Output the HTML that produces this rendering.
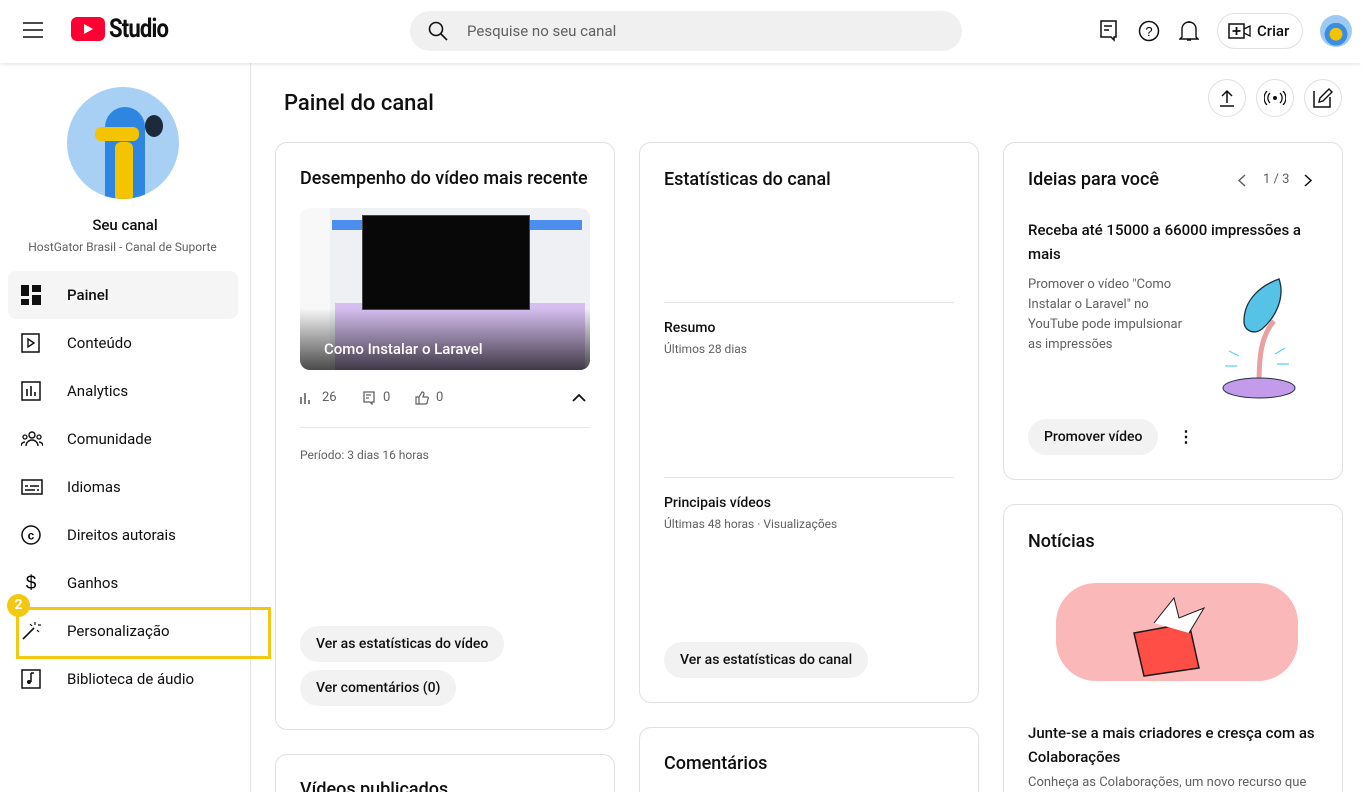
<!DOCTYPE html>
<html style="width:1361px;height:792px;overflow:hidden"><head><meta charset="utf-8"><style>
*{box-sizing:border-box;margin:0;padding:0}
body{width:1361px;height:792px;overflow:hidden;background:#fff;font-family:"Roboto","Liberation Sans",sans-serif;color:#0f0f0f;position:relative}
.abs{position:absolute}
.hdr{position:absolute;left:0;top:0;width:1361px;height:63px;background:#fff;box-shadow:0 1px 4px rgba(0,0,0,.12);z-index:5}
.side{position:absolute;left:0;top:63px;width:251px;height:729px;border-right:1px solid #e5e5e5}
.nav{position:absolute;left:8px;width:230px;height:48px;border-radius:8px;display:flex;align-items:center;font-size:15px}
.nav svg{position:absolute;left:13px}
.nav span{position:absolute;left:59px}
.card{position:absolute;border:1px solid #e0e0e0;border-radius:12px;background:#fff}
.h{font-size:18px;font-weight:500;position:absolute}
.btn{position:absolute;background:#f2f2f2;border-radius:18px;height:36px;font-size:14px;font-weight:500;display:flex;align-items:center;padding:0 16px}
.sm{font-size:12px;color:#606060;position:absolute}
.t{font-size:14px;font-weight:500;position:absolute}
.circ{position:absolute;width:38px;height:38px;border:1px solid #e0e0e0;border-radius:50%;display:flex;align-items:center;justify-content:center}
</style></head><body>
<div class="hdr">
 <svg class="abs" style="left:23px;top:21px" width="20" height="18"><path d="M0 2h20M0 9h20M0 16h20" stroke="#0f0f0f" stroke-width="1.5"/></svg>
 <svg class="abs" style="left:71px;top:17px" width="34" height="24"><rect width="34" height="24" rx="6" fill="#ff0033"/><path d="M13 7l9 5-9 5z" fill="#fff"/></svg>
 <div class="abs" style="left:109px;top:14px;font-size:26px;font-weight:700;letter-spacing:-1px;transform:scaleX(.85);transform-origin:left">Studio</div>
 <div class="abs" style="left:410px;top:11px;width:552px;height:40px;background:#f0f0f0;border-radius:20px"></div>
 <svg class="abs" style="left:428px;top:21px" width="20" height="20"><circle cx="8" cy="8" r="6.5" fill="none" stroke="#0f0f0f" stroke-width="1.6"/><path d="M13 13l6 6" stroke="#0f0f0f" stroke-width="1.6"/></svg>
 <div class="abs" style="left:467px;top:22px;font-size:15px;color:#606060">Pesquise no seu canal</div>
 <svg class="abs" style="left:1100px;top:20px" width="18" height="22"><path d="M1 1h15v16h-2v3l-3-3H1z M4 6h8M4 10h5" fill="none" stroke="#0f0f0f" stroke-width="1.5"/></svg>
 <svg class="abs" style="left:1138px;top:20px" width="22" height="22"><circle cx="11" cy="11" r="9.5" fill="none" stroke="#0f0f0f" stroke-width="1.5"/><text x="11" y="16" font-size="13" text-anchor="middle" font-family="Liberation Sans">?</text></svg>
 <svg class="abs" style="left:1179px;top:19px" width="20" height="24"><path d="M3 18V10a7 7 0 0114 0v8l2 2H1z M8 21h4M10 2v2" fill="none" stroke="#0f0f0f" stroke-width="1.4"/></svg>
 <div class="abs" style="left:1217px;top:13px;width:86px;height:36px;border:1px solid #e0e0e0;border-radius:18px"></div>
 <svg class="abs" style="left:1228px;top:22px" width="24" height="18"><rect x="1" y="2" width="15" height="14" fill="none" stroke="#0f0f0f" stroke-width="1.5"/><path d="M8.5 5v8M4.5 9h8" stroke="#0f0f0f" stroke-width="1.8"/><path d="M16 7l6-3v10l-6-3" fill="none" stroke="#0f0f0f" stroke-width="1.3"/></svg>
 <div class="abs" style="left:1257px;top:22px;font-size:15px;font-weight:500">Criar</div>
 <div class="abs" style="left:1320px;top:15px;width:32px;height:32px;border-radius:50%;background:radial-gradient(circle at 50% 60%,#f5c400 0 25%,#3b8de0 26% 45%,#9ccaf3 46%)"></div>
</div>

<div class="side">
 <div class="abs" style="left:67px;top:24px;width:112px;height:112px;border-radius:50%;background:#a8d0f5;overflow:hidden">
  <div class="abs" style="left:38px;top:20px;width:40px;height:95px;background:#2f86e0;border-radius:20px 20px 0 0"></div>
  <div class="abs" style="left:48px;top:55px;width:18px;height:60px;background:#f5c400;border-radius:6px"></div>
  <div class="abs" style="left:28px;top:40px;width:44px;height:14px;background:#f5c400;border-radius:6px"></div>
  <div class="abs" style="left:78px;top:28px;width:18px;height:22px;background:#1e2a3a;border-radius:50%"></div>
 </div>
 <div class="abs" style="left:0;width:250px;top:153px;text-align:center;font-size:15px;font-weight:500">Seu canal</div>
 <div class="abs" style="left:0;width:245px;top:177px;text-align:center;font-size:12px;color:#606060">HostGator Brasil - Canal de Suporte</div>
 <div class="nav" style="top:208px;background:#f5f5f5;font-weight:500"><svg width="20" height="20"><path d="M0 0h8v11H0zM11 0h9v7h-9zM11 10h9v10h-9zM0 14h8v6H0z" fill="#0f0f0f"/></svg><span>Painel</span></div>
 <div class="nav" style="top:256px"><svg width="20" height="20"><rect x="1" y="1" width="17" height="18" fill="none" stroke="#0f0f0f" stroke-width="1.5"/><path d="M7 6l6 4-6 4z" fill="none" stroke="#0f0f0f" stroke-width="1.4"/></svg><span>Conteúdo</span></div>
 <div class="nav" style="top:304px"><svg width="20" height="20"><rect x="1" y="1" width="18" height="18" fill="none" stroke="#0f0f0f" stroke-width="1.5"/><path d="M6 8v7M10 5v10M14 11v4" stroke="#0f0f0f" stroke-width="1.6"/></svg><span>Analytics</span></div>
 <div class="nav" style="top:352px"><svg width="22" height="16"><circle cx="11" cy="4" r="3" fill="none" stroke="#0f0f0f" stroke-width="1.4"/><circle cx="4" cy="6" r="2" fill="none" stroke="#0f0f0f" stroke-width="1.3"/><circle cx="18" cy="6" r="2" fill="none" stroke="#0f0f0f" stroke-width="1.3"/><path d="M5 15a6 6 0 0112 0M0 15a4 4 0 014-4M22 15a4 4 0 00-4-4" fill="none" stroke="#0f0f0f" stroke-width="1.4"/></svg><span>Comunidade</span></div>
 <div class="nav" style="top:400px"><svg width="22" height="16"><rect x="1" y="1" width="20" height="14" fill="none" stroke="#0f0f0f" stroke-width="1.5"/><path d="M4 7h3M9 7h9M4 11h10M16 11h2" stroke="#0f0f0f" stroke-width="1.5"/></svg><span>Idiomas</span></div>
 <div class="nav" style="top:448px"><svg width="20" height="20"><circle cx="10" cy="10" r="9" fill="none" stroke="#0f0f0f" stroke-width="1.5"/><text x="10" y="14.5" font-size="12" font-weight="bold" text-anchor="middle" font-family="Liberation Sans">c</text></svg><span>Direitos autorais</span></div>
 <div class="nav" style="top:496px"><svg width="20" height="22"><text x="10" y="17" font-size="19" text-anchor="middle" font-family="Liberation Sans">$</text></svg><span>Ganhos</span></div>
 <div class="nav" style="top:544px"><svg width="20" height="20"><path d="M2 18L13 7" stroke="#0f0f0f" stroke-width="1.6"/><path d="M14 1v3M17 4h3M16 9l2 2M9 3l2 2" stroke="#0f0f0f" stroke-width="1.2"/></svg><span>Personalização</span></div>
 <div class="nav" style="top:592px"><svg width="20" height="20"><rect x="1" y="1" width="18" height="18" fill="none" stroke="#0f0f0f" stroke-width="1.5"/><path d="M10 4v9M10 4h3" stroke="#0f0f0f" stroke-width="1.5"/><circle cx="8" cy="13" r="2" fill="#0f0f0f"/></svg><span>Biblioteca de áudio</span></div>
 <div class="abs" style="left:16px;top:544px;width:255px;height:52px;border:3px solid #f2c811"></div>
 <div class="abs" style="left:7px;top:531px;width:23px;height:23px;border-radius:50%;background:#f2c811;color:#fff;font-size:14px;font-weight:700;text-align:center;line-height:23px">2</div>
</div>

<div class="abs" style="left:284px;top:91px;font-size:22px;font-weight:500">Painel do canal</div>
<div class="circ" style="left:1208px;top:79px"><svg width="16" height="18"><path d="M8 14V2M3 7l5-5 5 5M1 17h14" fill="none" stroke="#0f0f0f" stroke-width="1.5"/></svg></div>
<div class="circ" style="left:1256px;top:79px"><svg width="22" height="14"><circle cx="11" cy="7" r="2" fill="#0f0f0f"/><path d="M6 2a7 7 0 000 10M16 2a7 7 0 010 10M3 0a10 10 0 000 14M19 0a10 10 0 010 14" fill="none" stroke="#0f0f0f" stroke-width="1.3"/></svg></div>
<div class="circ" style="left:1304px;top:79px"><svg width="20" height="20"><path d="M1 3v16h16V9" fill="none" stroke="#0f0f0f" stroke-width="1.5"/><path d="M6 14l1-4 9-9 3 3-9 9z" fill="none" stroke="#0f0f0f" stroke-width="1.4"/></svg></div>

<!-- card 1 -->
<div class="card" style="left:275px;top:142px;width:340px;height:588px">
 <div class="h" style="left:24px;top:25px">Desempenho do vídeo mais recente</div>
 <div class="abs" style="left:24px;top:65px;width:290px;height:162px;border-radius:10px;overflow:hidden;background:#eef0f4">
  <div class="abs" style="left:0;top:0;width:30px;height:162px;background:#f8f8f8"></div>
  <div class="abs" style="left:32px;top:12px;width:250px;height:10px;background:#4b8ef0"></div>
  <div class="abs" style="left:35px;top:95px;width:250px;height:67px;background:#d6bff0"></div>
  <div class="abs" style="left:62px;top:7px;width:168px;height:95px;background:#080808;border:1px solid #444"></div>
  <div class="abs" style="left:0;top:100px;width:290px;height:62px;background:linear-gradient(rgba(0,0,0,0),rgba(0,0,0,.7))"></div>
  <div class="abs" style="left:24px;top:132px;color:#fff;font-size:15px;font-weight:500">Como Instalar o Laravel</div>
 </div>
 <svg class="abs" style="left:24px;top:249px" width="12" height="12"><path d="M1 5v7M5 1v11M9 8v4" stroke="#606060" stroke-width="1.6"/></svg>
 <div class="abs" style="left:46px;top:247px;font-size:13px;color:#606060">26</div>
 <svg class="abs" style="left:87px;top:248px" width="12" height="14"><path d="M1 1h10v10H9v2l-2-2H1z M3 4h5M3 7h3" fill="none" stroke="#606060" stroke-width="1.3"/></svg>
 <div class="abs" style="left:107px;top:247px;font-size:13px;color:#606060">0</div>
 <svg class="abs" style="left:139px;top:248px" width="14" height="14"><path d="M1 6h3v7H1zM4 6l3-5c2 0 2 1 2 2l-1 3h4c1 0 2 1 1 2l-1 4c0 1-1 1-2 1H4" fill="none" stroke="#606060" stroke-width="1.2"/></svg>
 <div class="abs" style="left:160px;top:247px;font-size:13px;color:#606060">0</div>
 <svg class="abs" style="left:296px;top:250px" width="14" height="9"><path d="M1 8l6-6 6 6" fill="none" stroke="#0f0f0f" stroke-width="1.8"/></svg>
 <div class="abs" style="left:24px;top:284px;width:290px;height:1px;background:#e5e5e5"></div>
 <div class="sm" style="left:24px;top:305px">Período: 3 dias 16 horas</div>
 <div class="btn" style="left:24px;top:483px">Ver as estatísticas do vídeo</div>
 <div class="btn" style="left:24px;top:527px">Ver comentários (0)</div>
</div>
<div class="card" style="left:275px;top:754px;width:340px;height:60px"><div class="h" style="left:24px;top:24px">Vídeos publicados</div></div>

<!-- card 2 -->
<div class="card" style="left:639px;top:142px;width:340px;height:561px">
 <div class="h" style="left:24px;top:26px">Estatísticas do canal</div>
 <div class="abs" style="left:24px;top:159px;width:290px;height:1px;background:#e5e5e5"></div>
 <div class="t" style="left:24px;top:177px">Resumo</div>
 <div class="sm" style="left:24px;top:199px">Últimos 28 dias</div>
 <div class="abs" style="left:24px;top:334px;width:290px;height:1px;background:#e5e5e5"></div>
 <div class="t" style="left:24px;top:352px">Principais vídeos</div>
 <div class="sm" style="left:24px;top:374px">Últimas 48 horas · Visualizações</div>
 <div class="btn" style="left:24px;top:499px">Ver as estatísticas do canal</div>
</div>
<div class="card" style="left:639px;top:727px;width:340px;height:80px"><div class="h" style="left:24px;top:25px">Comentários</div></div>

<!-- card 3 -->
<div class="card" style="left:1003px;top:142px;width:340px;height:338px">
 <div class="h" style="left:24px;top:26px">Ideias para você</div>
 <svg class="abs" style="left:234px;top:31px" width="8" height="13"><path d="M7 1L1 6.5 7 12" fill="none" stroke="#606060" stroke-width="1.5"/></svg>
 <div class="abs" style="left:259px;top:29px;font-size:13px;color:#606060">1 / 3</div>
 <svg class="abs" style="left:300px;top:31px" width="8" height="13"><path d="M1 1l6 5.5L1 12" fill="none" stroke="#0f0f0f" stroke-width="1.5"/></svg>
 <div class="abs" style="left:24px;top:75px;width:290px;font-size:15px;font-weight:500;line-height:24px">Receba até 15000 a 66000 impressões a mais</div>
 <div class="abs" style="left:24px;top:132px;width:155px;font-size:13px;color:#606060;line-height:20px">Promover o vídeo "Como Instalar o Laravel" no YouTube pode impulsionar as impressões</div>
 <svg class="abs" style="left:215px;top:133px" width="80" height="125"><path d="M40 110C40 80 42 60 55 45" stroke="#e8a0a0" stroke-width="5" fill="none"/><path d="M60 3C40 10 25 25 25 45c0 10 10 14 18 8C58 40 66 20 60 3z" fill="#56c2e6" stroke="#1c3040" stroke-width="1.3"/><path d="M10 75l10 5M6 90h12M66 72l-10 6M70 88H58" stroke="#5cd0f0" stroke-width="1.2"/><ellipse cx="40" cy="112" rx="36" ry="10" fill="#c39bea" stroke="#1c3040"/></svg>
 <div class="btn" style="left:24px;top:276px">Promover vídeo</div>
 <div class="abs" style="left:174px;top:284px;font-size:16px;font-weight:700">⋮</div>
</div>
<div class="card" style="left:1003px;top:504px;width:340px;height:310px">
 <div class="h" style="left:24px;top:26px">Notícias</div>
 <div class="abs" style="left:52px;top:78px;width:242px;height:98px;background:#fbb8b8;border-radius:40px"></div>
 <svg class="abs" style="left:120px;top:88px" width="110" height="85"><path d="M10 40l55-10 10 45-55 8z" fill="#ff4e45" stroke="#1a1a1a" stroke-width="1.5"/><path d="M30 30l20-25 5 20 25-10-15 25" fill="#fff" stroke="#1a1a1a"/></svg>
 <div class="abs" style="left:24px;top:216px;width:300px;font-size:15px;font-weight:500;line-height:24px">Junte-se a mais criadores e cresça com as Colaborações</div>
 <div class="abs" style="left:24px;top:270px;font-size:13px;color:#606060">Conheça as Colaborações, um novo recurso que</div>
</div>
</body></html>
